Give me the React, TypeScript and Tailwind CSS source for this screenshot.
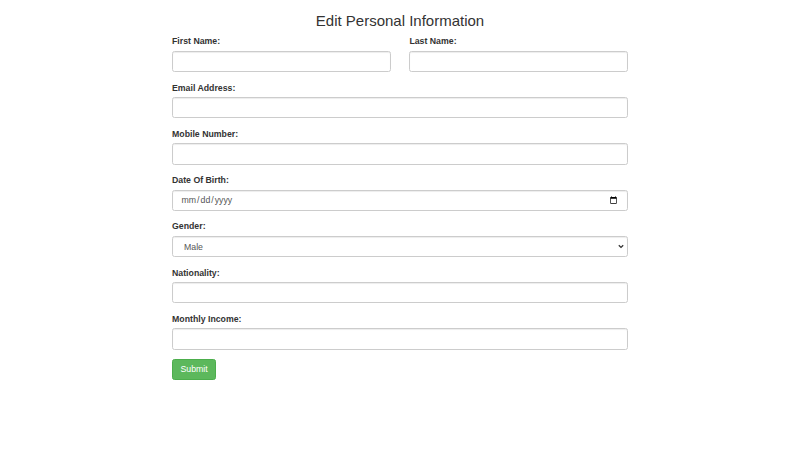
import React from "react";

const inputCls =
  "block w-full h-[21.25px] px-[7.5px] py-[3.75px] text-[8.75px] leading-[1.43] text-[#555] bg-white border border-[#ccc] rounded-[2.5px] shadow-[inset_0_1px_1px_rgba(0,0,0,0.075)] outline-none";

function Field({ label, children }: { label: string; children: React.ReactNode }) {
  return (
    <div className="mb-[9.375px]">
      <label className="block mb-[3.125px] text-[8.75px] leading-[12.5px] font-bold text-[#333]">
        {label}
      </label>
      {children}
    </div>
  );
}

export default function App() {
  return (
    <div
      className="min-h-[450px] bg-white text-[#333]"
      style={{ fontFamily: '"Liberation Sans", Arial, sans-serif' }}
    >
      <div className="w-[456px] mx-auto">
        <h3 className="mt-[12.5px] mb-[6.25px] text-[15px] leading-[16.5px] font-normal text-center text-[#333]">
          Edit Personal Information
        </h3>
        <form onSubmit={e => e.preventDefault()}>
          <div className="flex gap-[18.75px]">
            <div className="flex-1">
              <Field label="First Name:">
                <input type="text" className={inputCls} />
              </Field>
            </div>
            <div className="flex-1">
              <Field label="Last Name:">
                <input type="text" className={inputCls} />
              </Field>
            </div>
          </div>
          <Field label="Email Address:">
            <input type="email" className={inputCls} />
          </Field>
          <Field label="Mobile Number:">
            <input type="text" className={inputCls} />
          </Field>
          <Field label="Date Of Birth:">
            <input type="date" className={inputCls} />
          </Field>
          <Field label="Gender:">
            <div className="relative">
              <select className={inputCls + " appearance-none pl-[11px]"} defaultValue="Male">
                <option>Male</option>
                <option>Female</option>
              </select>
              <svg
                className="absolute right-[4px] top-[8px] pointer-events-none"
                width="6" height="5" viewBox="0 0 6 5"
              >
                <path d="M0.8 1.2 L3 3.4 L5.2 1.2" fill="none" stroke="#333" strokeWidth="1.3" />
              </svg>
            </div>
          </Field>
          <Field label="Nationality:">
            <input type="text" className={inputCls} />
          </Field>
          <Field label="Monthly Income:">
            <input type="text" className={inputCls} />
          </Field>
          <button
            type="submit"
            className="block h-[21.25px] px-[7.5px] text-[8.75px] leading-[1.43] text-white bg-[#5cb85c] border border-[#4cae4c] rounded-[2.5px]"
          >
            Submit
          </button>
        </form>
      </div>
    </div>
  );
}
